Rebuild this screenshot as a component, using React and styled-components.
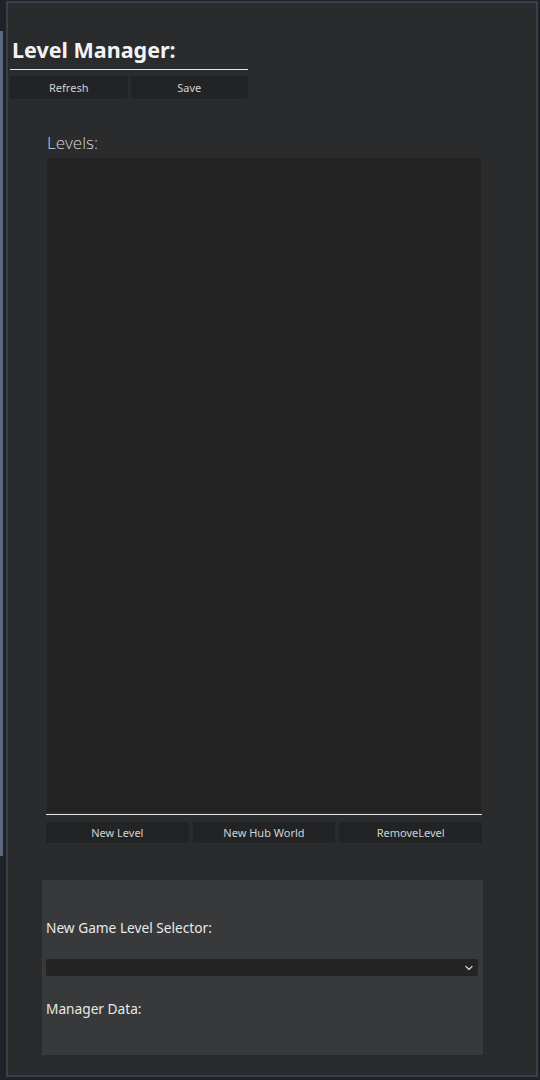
import React from 'react';
import styled, { createGlobalStyle } from 'styled-components';
import { ChevronDown } from 'lucide-react';


const GlobalStyle = createGlobalStyle`
  html, body {
    margin: 0;
    padding: 0;
    background: #1f2329;
  }

  body {
    font-family: "Noto Sans", "Open Sans", sans-serif;
    color: #e4e4e4;
  }
`;

const StyledRoot = styled.div`
  display: flex;
  width: 540px;
  height: 1080px;
  box-sizing: border-box;
  padding: 1px 2px 3px 0;
  background: #1f2329;
`;

const SideRail = styled.div`
  width: 3px;
  height: 825px;
  margin-top: 30px;
  background: #5c687b;
`;

const Panel = styled.div`
  flex: 1;
  display: flex;
  flex-direction: column;
  margin-left: 3px;
  padding: 33px 0 0 2px;
  border: 2px solid #3a404a;
  background: #2a2b2d;
  overflow: hidden;
`;

const Header = styled.div`
  width: 238px;
`;

const Title = styled.h1`
  margin: 0 0 0 2px;
  font-size: 21.5px;
  line-height: 28px;
  font-weight: 700;
  color: #f2f2f2;
`;

const Rule = styled.div`
  height: 1px;
  margin-top: ${p => p.$top}px;
  background: #e6e6e6;
`;

const ButtonRow = styled.div`
  display: grid;
  grid-template-columns: repeat(${p => p.$cols}, 1fr);
  gap: ${p => p.$gap}px;
  margin-top: ${p => p.$top}px;
`;

const Button = styled.button`
  height: ${p => p.$height}px;
  padding: 0;
  border: none;
  border-radius: 2px;
  background: #222325;
  color: #d2d2d2;
  font-family: "Noto Sans", "Open Sans", sans-serif;
  font-size: 11px;
`;

const Levels = styled.section`
  width: 436px;
  margin: 33px 0 0 36px;
`;

const SectionLabel = styled.div`
  margin-left: 1px;
  font-family: "Open Sans", "Noto Sans", sans-serif;
  font-weight: 300;
  font-size: 17px;
  line-height: 22px;
  color: #d4d4d4;
`;

const LevelList = styled.div`
  height: 654px;
  margin: 4px 1px 0;
  background: #232324;
`;

const DataPanel = styled.section`
  width: 441px;
  height: 175px;
  box-sizing: border-box;
  margin: 37px 0 0 32px;
  padding: 38px 5px 0 4px;
  background: #38393b;
`;

const FieldLabel = styled.div`
  margin-top: ${p => p.$top || 0}px;
  font-size: 13.7px;
  line-height: 20px;
  color: #e8e8e8;
`;

const Select = styled.div`
  display: flex;
  align-items: center;
  justify-content: flex-end;
  height: 17px;
  margin-top: 21px;
  padding-right: 3px;
  border-radius: 2px;
  background: #242425;
  color: #cfcfcf;
`;


const App = () => (
  <>
    <GlobalStyle />
    <StyledRoot>
      <SideRail />
      <Panel>
        <Header>
          <Title>Level Manager:</Title>
          <Rule $top={5} />
          <ButtonRow $cols={2} $gap={3} $top={6}>
            <Button $height={23}>Refresh</Button>
            <Button $height={23}>Save</Button>
          </ButtonRow>
        </Header>

        <Levels>
          <SectionLabel>Levels:</SectionLabel>
          <LevelList />
          <Rule $top={2} />
          <ButtonRow $cols={3} $gap={4} $top={7}>
            <Button $height={21}>New Level</Button>
            <Button $height={21}>New Hub World</Button>
            <Button $height={21}>RemoveLevel</Button>
          </ButtonRow>
        </Levels>

        <DataPanel>
          <FieldLabel>New Game Level Selector:</FieldLabel>
          <Select>
            <ChevronDown size={12} strokeWidth={2.5} />
          </Select>
          <FieldLabel $top={23}>Manager Data:</FieldLabel>
        </DataPanel>
      </Panel>
    </StyledRoot>
  </>
);

export default App;
